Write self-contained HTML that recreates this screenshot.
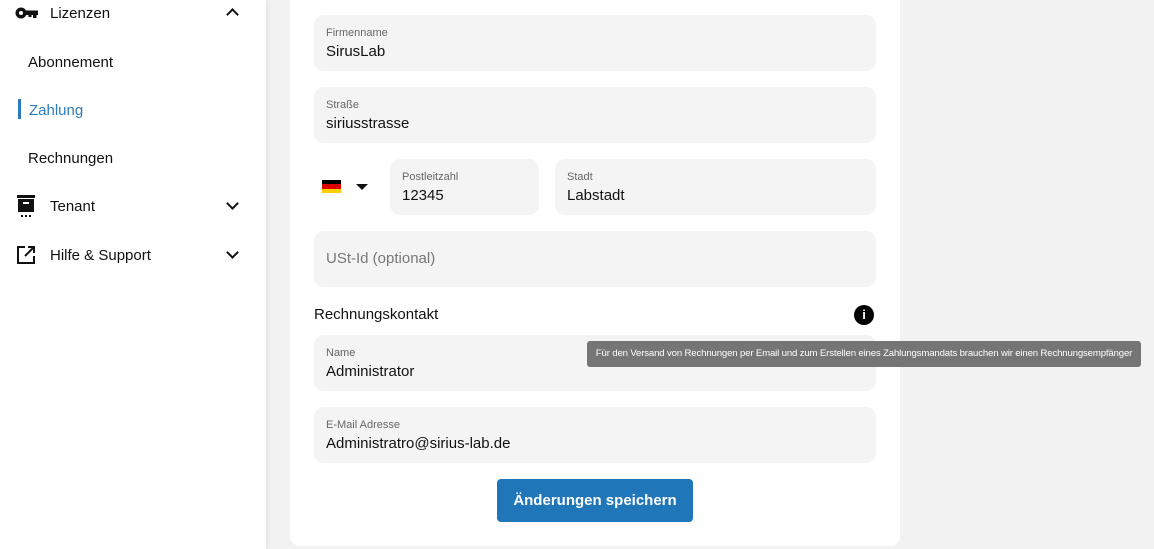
<!DOCTYPE html>
<html><head><meta charset="utf-8"><style>
*{margin:0;padding:0;box-sizing:border-box}
body{width:1154px;height:549px;overflow:hidden;background:#f2f2f2;font-family:"Liberation Sans",sans-serif;position:relative;color:#111}
.side{position:absolute;left:0;top:0;width:266px;height:549px;background:#fff;box-shadow:2px 0 4px rgba(0,0,0,.06)}
.it{position:absolute;font-size:15px;color:#111}
.card{position:absolute;left:290px;top:-10px;width:610px;height:556px;background:#fff;border-radius:10px}
.f{position:absolute;background:#f4f4f4;border-radius:10px}
.f .l{position:absolute;left:12px;top:12px;font-size:11px;color:#666}
.f .v{position:absolute;left:12px;top:28px;font-size:15px;color:#111}
.chev{position:absolute;left:228px;width:9px;height:9px;border-right:2px solid #111;border-bottom:2px solid #111}
</style></head><body>
<div class="side">
<svg style="position:absolute;left:15px;top:6px" width="24" height="14" viewBox="0 0 24 14"><circle cx="6" cy="7" r="5.5" fill="#111"/><circle cx="6" cy="7" r="2" fill="#fff"/><rect x="10" y="4.5" width="13" height="4.5" fill="#111"/><rect x="18" y="8" width="3.5" height="4" fill="#111"/><rect x="13.5" y="8" width="3" height="3" fill="#111"/></svg>
<div class="it" style="left:50px;top:5px">Lizenzen</div>
<div class="chev" style="top:10px;transform:rotate(-135deg)"></div>
<div class="it" style="left:28px;top:54px">Abonnement</div>
<div style="position:absolute;left:18px;top:99px;width:3px;height:20px;background:#2a7bc0"></div>
<div class="it" style="left:29px;top:102px;color:#2a7bc0">Zahlung</div>
<div class="it" style="left:28px;top:150px">Rechnungen</div>
<svg style="position:absolute;left:17px;top:195px" width="18" height="23" viewBox="0 0 18 23"><rect x="0" y="0" width="18" height="3" fill="#111"/><rect x="1" y="4" width="16" height="13" fill="#111"/><rect x="6" y="7" width="6" height="2" fill="#fff"/><rect x="4" y="20" width="2" height="2" fill="#111"/><rect x="8" y="20" width="2" height="2" fill="#111"/><rect x="12" y="20" width="2" height="2" fill="#111"/></svg>
<div class="it" style="left:50px;top:198px">Tenant</div>
<div class="chev" style="top:199px;transform:rotate(45deg)"></div>
<svg style="position:absolute;left:17px;top:246px" width="18" height="18" viewBox="0 0 18 18"><path d="M8 1H1v16h16v-7" fill="none" stroke="#111" stroke-width="2"/><path d="M11 1h6v6M17 1L8 10" fill="none" stroke="#111" stroke-width="2"/></svg>
<div class="it" style="left:50px;top:247px">Hilfe &amp; Support</div>
<div class="chev" style="top:248px;transform:rotate(45deg)"></div>
</div>
<div class="card"></div>
<div class="f" style="left:314px;top:15px;width:562px;height:56px"><div class="l">Firmenname</div><div class="v">SirusLab</div></div>
<div class="f" style="left:314px;top:87px;width:562px;height:56px"><div class="l">Straße</div><div class="v">siriusstrasse</div></div>
<div style="position:absolute;left:322px;top:180px;width:19px;height:13px"><div style="height:4.3px;background:#000"></div><div style="height:4.3px;background:#dd0000"></div><div style="height:4.4px;background:#ffce00"></div></div>
<div style="position:absolute;left:356px;top:184px;border-left:6px solid transparent;border-right:6px solid transparent;border-top:6px solid #111"></div>
<div class="f" style="left:390px;top:159px;width:149px;height:56px"><div class="l">Postleitzahl</div><div class="v">12345</div></div>
<div class="f" style="left:555px;top:159px;width:321px;height:56px"><div class="l">Stadt</div><div class="v">Labstadt</div></div>
<div class="f" style="left:314px;top:231px;width:562px;height:56px"><div class="v" style="top:19px;color:#777">USt-Id (optional)</div></div>
<div style="position:absolute;left:314px;top:306px;font-size:15px">Rechnungskontakt</div>
<div style="position:absolute;left:854px;top:305px;width:20px;height:20px;border-radius:50%;background:#000;color:#fff;font-weight:bold;font-size:13px;text-align:center;line-height:20px">i</div>
<div class="f" style="left:314px;top:335px;width:562px;height:56px"><div class="l">Name</div><div class="v">Administrator</div></div>
<div class="f" style="left:314px;top:407px;width:562px;height:56px"><div class="l">E-Mail Adresse</div><div class="v">Administratro@sirius-lab.de</div></div>
<div style="position:absolute;left:587px;top:341px;width:554px;height:26px;background:#757575;border-radius:3px;color:#fff;font-size:9.6px;line-height:26px;text-align:center;white-space:nowrap;letter-spacing:-0.15px">Für den Versand von Rechnungen per Email und zum Erstellen eines Zahlungsmandats brauchen wir einen Rechnungsempfänger</div>
<div style="position:absolute;left:497px;top:479px;width:196px;height:43px;background:#1f76b9;border-radius:4px;color:#fff;font-weight:bold;font-size:15px;text-align:center;line-height:43px">Änderungen speichern</div>
</body></html>
